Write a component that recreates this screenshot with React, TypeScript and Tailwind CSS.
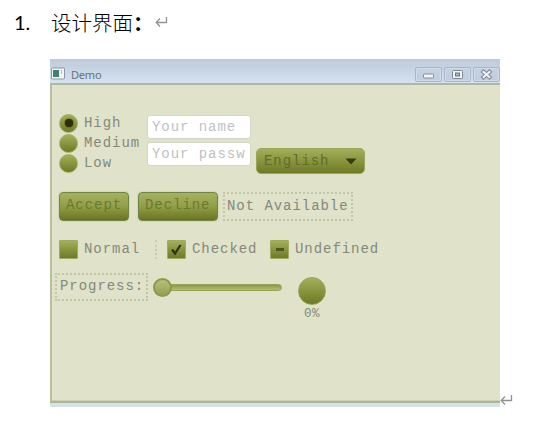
import React from "react";

const face = "font-['Liberation_Mono',monospace] text-[14px] tracking-[0.95px] whitespace-pre";
const mono = `${face} leading-[20px] text-[#85897a]`;
const olive = "bg-linear-to-b from-[#a3b058] to-[#707a25]";

function ReturnMark() {
  return (
    <svg width="13" height="12" viewBox="0 0 13 12" fill="none" stroke="#929292" strokeWidth="1.3" className="shrink-0">
      <path d="M11.5 1V6.5H1.5M5 2.5L1.2 6.5L5 10.5" />
    </svg>
  );
}

function Radio({ label, on = false }: { label: string; on?: boolean }) {
  return (
    <div className="flex h-5 items-center">
      <span className={`flex size-[19px] shrink-0 items-center justify-center rounded-full border border-[#a3ad65] ${olive}`}>
        {on && <span className="size-[8px] rounded-full bg-[#302b08] shadow-[0_0_2px_#302b08]" />}
      </span>
      <span className={`ml-[6px] ${mono}`}>{label}</span>
    </div>
  );
}

function Field({ text }: { text: string }) {
  return (
    <div className="h-6 w-[104px] overflow-hidden rounded-[3px] border border-[#d4d6c7] bg-white pl-[4px]">
      <span className={`block overflow-hidden leading-[22px] text-[#bfc2bf] ${face}`}>{text}</span>
    </div>
  );
}

function Button({ label, width }: { label: string; width: string }) {
  return (
    <div className={`h-[29px] rounded-[4px] border-[1.5px] border-[#6f8544] bg-linear-to-b from-[#a6b15f] via-[#929e47] to-[#6c7421] pl-[6px] shadow-[0_0_1px_1px_#d3d9b9] ${width}`}>
      <span className={`block leading-[24px] text-[#6a7a2d] ${face}`}>{label}</span>
    </div>
  );
}

function Check({ state }: { state: "off" | "on" | "mixed" }) {
  return (
    <span className={`flex size-[19px] shrink-0 items-center justify-center rounded-[1px] border border-[#a1ab60] ${olive}`}>
      {state === "on" && (
        <svg width="15" height="15" viewBox="0 0 15 15" fill="none" stroke="#2f300f" strokeWidth="2.2">
          <path d="M3 7.5L6 11.5L11.5 3" />
        </svg>
      )}
      {state === "mixed" && <span className="h-[3px] w-[8px] bg-[#50561a]" />}
    </span>
  );
}

function WindowButton({ kind }: { kind: "min" | "max" | "close" }) {
  return (
    <div className="flex h-[15px] w-[27px] items-center justify-center rounded-[2px] border border-[#a9b6c9] bg-linear-to-b from-[#c6d2e1] to-[#c1cddd] shadow-[inset_0_0_0_1px_#d0dbe8]">
      <svg width="13" height="11" viewBox="0 0 13 11" fill="none">
        {kind === "min" && <rect x="1.5" y="5" width="10" height="4" rx="1" fill="#f5f6f7" stroke="#858d99" />}
        {kind === "max" && (
          <>
            <rect x="1.5" y="1.5" width="10" height="8" rx="1" fill="#f1f3f5" stroke="#7d8590" />
            <rect x="4.5" y="4" width="4" height="3" fill="#aab2bd" stroke="#6e7681" />
          </>
        )}
        {kind === "close" && (
          <>
            <path d="M2 1.5L11 9.5M11 1.5L2 9.5" stroke="#848b97" strokeWidth="4.2" />
            <path d="M2.8 2.2L10.2 8.8M10.2 2.2L2.8 8.8" stroke="#f2f3f5" strokeWidth="2" />
          </>
        )}
      </svg>
    </div>
  );
}

export default function App() {
  return (
    <div className="h-[426px] w-[540px] overflow-hidden bg-white">
      <div className="flex h-[59px] items-start pt-[8px] pl-[14px]">
        <span className="w-[37px] font-['Lato',sans-serif] text-[20px] leading-[28px] font-normal text-black">1.</span>
        <span className="w-[105px] font-['Noto_Sans_CJK_SC',sans-serif] text-[20.5px] leading-[28px] font-light whitespace-nowrap text-black">
          设计界面<span className="font-bold">：</span>
        </span>
        <div className="-ml-px pt-[8px]"><ReturnMark /></div>
      </div>

      <div className="flex items-end">
        <div className="ml-[50px] h-[348px] w-[450px] shrink-0 bg-[#d5e1ed]">
          <div className="flex h-[24px] items-start bg-linear-to-b from-[#bdcada] to-[#d5e2f1]">
            <svg width="17" height="14" viewBox="0 0 17 14" className="mt-[8px] shrink-0">
              <rect x="1.5" y="1" width="13" height="11" rx="1" fill="#f3f5f4" stroke="#8e98a2" />
              <rect x="3" y="3" width="6" height="7" fill="#3f8274" />
              <path d="M11.5 3V7" stroke="#b6bcc1" />
            </svg>
            <span className="mt-[8px] ml-[4px] font-['Noto_Sans','Open_Sans',sans-serif] text-[11px] leading-[15px] tracking-[-0.2px] text-[#69717c]">Demo</span>
            <div className="mt-[8px] ml-auto flex gap-[2px]">
              <WindowButton kind="min" />
              <WindowButton kind="max" />
              <WindowButton kind="close" />
            </div>
          </div>

          <div className="h-[320px] border-t-2 border-b-2 border-l-2 border-t-[#afb79f] border-b-[#adb594] border-l-[#b9bf9a] bg-[#e0e2ca] shadow-[inset_0_-1px_0_#cbd0b3]">
            <div className="flex pt-[28px] pl-[7px]">
              <div className="w-[88px]">
                <Radio label="High" on />
                <Radio label="Medium" />
                <Radio label="Low" />
              </div>
              <div className="flex flex-col gap-[3px] pt-[2px]">
                <Field text="Your name" />
                <Field text="Your passw" />
              </div>
              <div className={`mt-[35px] ml-[5px] flex h-[26px] w-[109px] items-center justify-between rounded-[5px] border border-[#9aa75b] pr-[7px] pl-[7px] ${olive}`}>
                <span className={`leading-[22px] text-[#606c2b] ${face}`}>English</span>
                <svg width="12" height="7" viewBox="0 0 12 7"><path d="M.5 .5H11.5L6 6.5Z" fill="#393b10" /></svg>
              </div>
            </div>

            <div className="flex pt-[18px] pl-[7px]">
              <Button label="Accept" width="w-[70px]" />
              <div className="ml-[9px]"><Button label="Decline" width="w-[80px]" /></div>
              <div className="ml-[5px] h-[29px] w-[130px] border-2 border-dotted border-[#c3c7aa] pl-[2px]">
                <span className={`block pt-[2px] ${mono}`}>Not Available</span>
              </div>
            </div>

            <div className="mt-[19px] flex h-[19px] pl-[7px]">
              <Check state="off" />
              <span className={`-mt-[1px] ml-[6px] w-[71px] ${mono}`}>Normal</span>
              <span className="w-[12px] border-l-2 border-dotted border-[#c9ccaf]" />
              <Check state="on" />
              <span className={`-mt-[1px] ml-[6px] w-[78px] ${mono}`}>Checked</span>
              <Check state="mixed" />
              <span className={`-mt-[1px] ml-[6px] ${mono}`}>Undefined</span>
            </div>

            <div className="mt-[14px] flex pl-[3px]">
              <div className="h-[28px] w-[93px] border-2 border-dotted border-[#c3c7aa] pl-[3px]">
                <span className={`block pt-px ${mono}`}>Progress:</span>
              </div>
              <div className="ml-[5px] flex h-[28px] w-[129px] items-center">
                <span className="z-10 size-[19px] shrink-0 rounded-full border-2 border-[#8b9a4b] bg-linear-to-b from-[#b7c07d] to-[#95a04f]" />
                <span className="-ml-px h-[7px] flex-1 rounded-r-full border border-[#98a253] bg-linear-to-b from-[#8f9a43] to-[#b4bc79]" />
              </div>
              <div className="ml-[16px] flex w-[28px] flex-col items-center pt-[4px]">
                <span className={`size-[28px] rounded-full border border-[#98a350] ${olive}`} />
                <span className="mt-px font-['Liberation_Mono',monospace] text-[12.5px] leading-[16px] tracking-[0.5px] text-[#85897a]">0%</span>
              </div>
            </div>
          </div>
        </div>
        <div className="pb-px"><ReturnMark /></div>
      </div>
    </div>
  );
}
